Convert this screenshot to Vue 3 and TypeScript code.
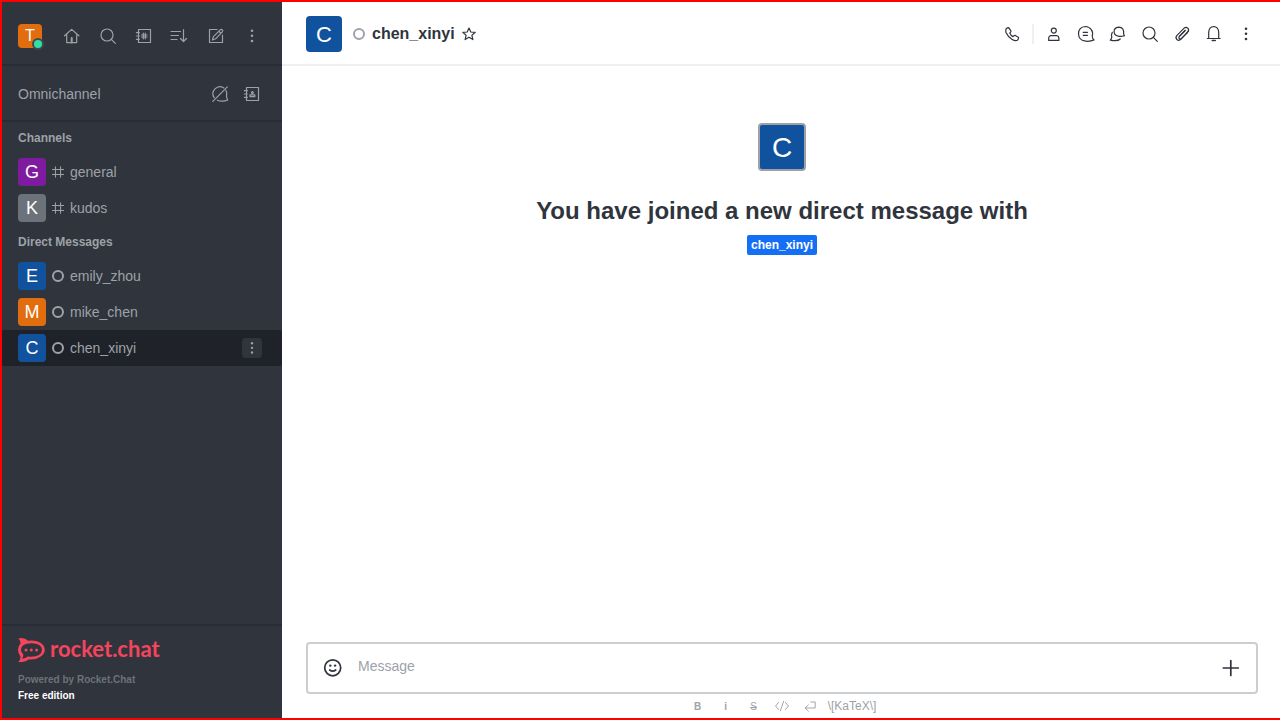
<script setup lang="ts">
import { ref } from 'vue'

interface Room {
  name: string
  letter: string
  color: string
}

interface Action {
  label: string
  icon: string
}

const icons: Record<string, string> = {
  home: '<path d="M2.5 9.8 9.700 3.400l7.200 6.400M4.700 8.400v8.200h10V8.400"/><path d="M9.700 12v4.600" stroke-width="2"/>',
  search: '<circle cx="9" cy="9" r="6"/><path d="m13.300 13.300 4 4"/>',
  directory:
    '<path d="M4.500 6V3.500h12v13h-12V14M4.500 7.500V9M4.500 11v1.500M2.400 6.700h3M2.400 10h3M2.400 13.300h3"/><path d="M9.300 7.200v5.600M11.300 7.200v5.600M7.500 9h5.600M7.500 11h5.600"/>',
  sort: '<path d="M1 5.500h9.500M1 9.500h7.500M1 13.500h6M13.500 3.500v12M10.500 12.500l3 3 3-3"/>',
  edit: '<path d="M11 3.500H3.500v13h13V9"/><path d="m6.500 14 .9-3.400 6.800-6.800q1-.9 2 0t.1 2L9.600 12.800zM12.800 5.200l2.100 2.100"/>',
  kebab:
    '<g fill="currentColor" stroke="none"><circle cx="10" cy="4.700" r="1.300"/><circle cx="10" cy="9.800" r="1.300"/><circle cx="10" cy="15" r="1.300"/></g>',
  chatOff:
    '<path d="M13.800 3.900A7 7 0 0 0 4.200 13.700M16 6.400q1.300 2.600.5 5.600.2 2.500 1.200 4-3.700 1.600-7.700 1-1.400-.1-2.600-.7M2.800 17.300 17.300 2.800"/>',
  contacts:
    '<path d="M4.500 6V3.500h12v13h-12V14M4.500 7.500V9M4.500 11v1.500M2.400 6.700h3M2.400 10h3M2.400 13.300h3"/><circle cx="10.400" cy="8.500" r=".9"/><path d="M8 12.600v-1.800h4.800v1.800z"/>',
  hash: '<path d="M7 4v12M13 4v12M3.500 7h13M3.500 13h13"/>',
  star: '<path d="m10 4 1.800 4 4.400.4-3.300 2.900 1 4.300-3.900-2.300-3.900 2.300 1-4.300-3.300-2.900L8.200 8z"/>',
  phone:
    '<path d="M4.300 4.700q1.200-1.100 2.400-1l2.300 3.500q-.1 1.200-1.300 1.900 1 2.400 3.300 3.500.9-1.200 2-1.300l3.600 2.200q.1 1.500-1.200 2.700-2.200 1-5.200-.8Q5.700 12.600 4 8.500q-.6-2.500.3-3.800z"/>',
  person:
    '<circle cx="9.800" cy="6.600" r="2.500"/><path d="M4.700 16.400v-2.300q.1-2.300 2-2.500h6.200q1.900.2 2 2.500v2.300z"/>',
  thread:
    '<path d="M16.200 12.300q1.200-4-.9-6.700Q13.200 2.600 9.500 2.500q-7 .6-7 7.200.2 6.800 7.400 7.500 4.500.4 8.200-1.300-1.700-1.100-1.900-3.600zM7.200 8.300h4.300M7.200 11.300h4.300"/>',
  discussion:
    '<path d="M15.600 9.500q.6-6.200-4.800-6.400-4.900.4-4.700 4.700.3 4.200 4.900 4.500 3 .3 5.500-.6-.9-.7-.9-2.200zM4.300 8.300q-1.200 2.300-.5 4.700-.1 2.100-1.500 3.100 7.500 1.500 9.900-1.100"/>',
  clip: '<path d="m15 9-5.900 6.100q-2.200 2.100-4.200.4-1.900-1.900.1-4.100l6.900-7.100q2.200-1.700 3.900-.2 1.700 1.800-.1 3.800l-6.300 6.500q-1.200 1-2.200.2-.9-1 .2-2.200l5.700-5.900"/><path d="m13.100 6.500-5.700 5.900M15 9l1.500-2"/>',
  bell: '<path d="M4.700 14.500V8.200Q5 2.800 9.700 2.500q4.700.3 5 5.700v6.300M3.300 14.500h12.800"/><path d="M8.300 16.500h2.900" stroke-width="1.600"/>',
  code: '<path d="M5.700 5.500 2 10l3.700 4.500M14.300 5.500 18 10l-3.700 4.500M12 4 8 16"/>',
  enter: '<path d="M11 5h5.500v7.500H4M8 8.500l-4 4 4 4"/>',
  plus: '<path d="M9.800 2.500v15M2.300 10h15"/>',
  smile:
    '<circle cx="9.700" cy="9.800" r="8"/><path d="M6.700 12q3 2.400 6 0"/><g fill="currentColor" stroke="none"><circle cx="7.300" cy="7.600" r="1.200"/><circle cx="12.100" cy="7.600" r="1.200"/></g>',
}

const sidebarActions: Action[] = [
  { label: 'Home', icon: 'home' },
  { label: 'Search', icon: 'search' },
  { label: 'Directory', icon: 'directory' },
  { label: 'Display', icon: 'sort' },
  { label: 'Create new', icon: 'edit' },
  { label: 'Administration', icon: 'kebab' },
]

const omnichannelActions: Action[] = [
  { label: 'Turn on answer chats', icon: 'chatOff' },
  { label: 'Contact center', icon: 'contacts' },
]

const roomActions: Action[] = [
  { label: 'User info', icon: 'person' },
  { label: 'Threads', icon: 'thread' },
  { label: 'Discussions', icon: 'discussion' },
  { label: 'Search messages', icon: 'search' },
  { label: 'Files', icon: 'clip' },
  { label: 'Notifications', icon: 'bell' },
  { label: 'Options', icon: 'kebab' },
]

const channels: Room[] = [
  { name: 'general', letter: 'G', color: 'purple' },
  { name: 'kudos', letter: 'K', color: 'grey' },
]

const directs: Room[] = [
  { name: 'emily_zhou', letter: 'E', color: 'blue' },
  { name: 'mike_chen', letter: 'M', color: 'orange' },
  { name: 'chen_xinyi', letter: 'C', color: 'blue' },
]

const activeRoom = ref('chen_xinyi')
const draft = ref('')
</script>

<template>
  <div class="app">
    <aside class="sidebar">
      <header class="topbar">
        <button class="me" aria-label="User menu">
          <span class="avatar small orange">T</span>
          <span class="online"></span>
        </button>
        <nav class="actions wide">
          <button v-for="a in sidebarActions" :key="a.icon" class="icon-btn" :aria-label="a.label">
            <svg class="icon" viewBox="0 0 20 20" v-html="icons[a.icon]"></svg>
          </button>
        </nav>
      </header>

      <section class="omni">
        <span>Omnichannel</span>
        <div class="actions">
          <button v-for="a in omnichannelActions" :key="a.icon" class="icon-btn" :aria-label="a.label">
            <svg class="icon" viewBox="0 0 20 20" v-html="icons[a.icon]"></svg>
          </button>
        </div>
      </section>

      <div class="rooms">
        <h2 class="group">Channels</h2>
        <a v-for="room in channels" :key="room.name" class="room" href="#" @click.prevent="activeRoom = room.name">
          <span class="avatar medium" :class="room.color">{{ room.letter }}</span>
          <svg class="hash" viewBox="3 3 14 14" v-html="icons.hash"></svg>
          <span class="room-name">{{ room.name }}</span>
        </a>
        <h2 class="group">Direct Messages</h2>
        <div v-for="room in directs" :key="room.name" class="room" :class="{ active: room.name === activeRoom }">
          <a class="room-link" href="#" @click.prevent="activeRoom = room.name">
            <span class="avatar medium" :class="room.color">{{ room.letter }}</span>
            <span class="status"></span>
            <span class="room-name">{{ room.name }}</span>
          </a>
          <button v-if="room.name === activeRoom" class="room-menu" aria-label="Options">
            <svg class="menu-icon" viewBox="0 0 20 20" v-html="icons.kebab"></svg>
          </button>
        </div>
      </div>

      <footer class="foot">
        <a class="logo" href="#">
          <svg class="logo-mark" viewBox="0 0 28 24">
            <path
              fill="currentColor"
              fill-rule="evenodd"
              d="M.3.400Q6.600-1 10 2.700 17.500 1.700 22 4.500q4.800 2.800 4.800 7.300T22 19q-4.500 3-11.200 2.500Q6.500 24.800.2 23.800 3 21.300 2.300 18.200 0 15.500 0 11.800T2.500 5.600Q2.700 2.500.3.400zM13.500 5.200Q3 5.500 2.900 11.800q.1 2.900 2.500 4.700-.2 2.600-1.200 4.200 3.400-.2 5.400-2.200Q23.700 19.600 24 11.800 23.700 5.500 13.500 5.200z"
            />
            <g fill="currentColor">
              <circle cx="8" cy="12" r="1.500" />
              <circle cx="13.300" cy="12" r="1.500" />
              <circle cx="18.600" cy="12" r="1.500" />
            </g>
          </svg>
          <span class="logo-text">rocket.chat</span>
        </a>
        <p class="powered">Powered by Rocket.Chat</p>
        <p class="edition">Free edition</p>
      </footer>
    </aside>

    <main class="main">
      <header class="room-header">
        <span class="avatar large blue">C</span>
        <span class="status"></span>
        <h1 class="title">chen_xinyi</h1>
        <button class="fav" aria-label="Favorite">
          <svg class="icon" viewBox="0 0 20 20" v-html="icons.star"></svg>
        </button>
        <div class="actions tools">
          <button class="icon-btn" aria-label="Call">
            <svg class="icon" viewBox="0 0 20 20" v-html="icons.phone"></svg>
          </button>
          <span class="divider"></span>
          <button v-for="a in roomActions" :key="a.icon" class="icon-btn" :aria-label="a.label">
            <svg class="icon" viewBox="0 0 20 20" v-html="icons[a.icon]"></svg>
          </button>
        </div>
      </header>

      <section class="body">
        <span class="avatar huge blue">C</span>
        <h2 class="intro">You have joined a new direct message with</h2>
        <a class="mention" href="#">chen_xinyi</a>
      </section>

      <section class="composer">
        <div class="box">
          <button class="icon-btn" aria-label="Emoji">
            <svg class="icon bold" viewBox="0 0 20 20" v-html="icons.smile"></svg>
          </button>
          <textarea v-model="draft" class="input" rows="1" placeholder="Message" aria-label="Message"></textarea>
          <button class="icon-btn" aria-label="More actions">
            <svg class="icon bold" viewBox="0 0 20 20" v-html="icons.plus"></svg>
          </button>
        </div>
        <div class="format">
          <button class="fmt strong" aria-label="Bold">B</button>
          <button class="fmt strong" aria-label="Italic">i</button>
          <button class="fmt strike" aria-label="Strike">S</button>
          <button class="fmt" aria-label="Code">
            <svg class="fmt-icon" viewBox="0 0 20 20" v-html="icons.code"></svg>
          </button>
          <button class="fmt" aria-label="Multi-line">
            <svg class="fmt-icon" viewBox="0 0 20 20" v-html="icons.enter"></svg>
          </button>
          <a class="katex" href="#">\[KaTeX\]</a>
        </div>
      </section>
    </main>
  </div>
</template>

<style>
body {
  margin: 0;
}
</style>

<style scoped>
.app {
  display: flex;
  box-sizing: border-box;
  height: 100vh;
  border: 2px solid #ff0000;
  border-right: 0;
  font-family: "Liberation Sans", Arial, sans-serif;
  font-size: 14px;
  line-height: 20px;
  color: #2f343d;
  background: #ffffff;
}
button {
  display: flex;
  align-items: center;
  justify-content: center;
  padding: 0;
  border: 0;
  background: none;
  color: inherit;
  font-family: inherit;
  cursor: pointer;
}
a {
  color: inherit;
  text-decoration: none;
}
h1,
h2,
p {
  margin: 0;
}
svg {
  fill: none;
  stroke: currentColor;
  stroke-width: 1.2;
  stroke-linejoin: round;
  stroke-linecap: round;
}
.icon {
  width: 20px;
  height: 20px;
}
.icon.bold {
  stroke-width: 1.7;
}
.icon-btn {
  width: 28px;
  height: 28px;
}
.actions {
  display: flex;
  align-items: center;
  gap: 4px;
}
.actions.wide {
  gap: 8px;
}
.avatar {
  display: flex;
  flex: none;
  align-items: center;
  justify-content: center;
  border-radius: 4px;
  color: #ffffff;
}
.small {
  width: 24px;
  height: 24px;
  font-size: 16px;
}
.medium {
  width: 28px;
  height: 28px;
  font-size: 18px;
}
.large {
  box-sizing: border-box;
  width: 36px;
  height: 36px;
  padding-top: 2px;
  font-size: 22px;
}
.huge {
  box-sizing: border-box;
  width: 48px;
  height: 48px;
  padding-top: 2px;
  border: 2px solid #9ea2a8;
  font-size: 28px;
}
.purple {
  background: #7f1b9f;
}
.grey {
  background: #6c727a;
}
.blue {
  background: #10529e;
}
.orange {
  background: #e26d0e;
}
.status {
  box-sizing: border-box;
  flex: none;
  width: 12px;
  height: 12px;
  border: 2px solid #9ea2a8;
  border-radius: 50%;
}

.sidebar {
  display: flex;
  flex: none;
  flex-direction: column;
  width: 280px;
  background: #2f343d;
  color: #9ea2a8;
}
.topbar {
  display: flex;
  box-sizing: border-box;
  align-items: center;
  justify-content: space-between;
  height: 64px;
  padding: 6px 16px 0;
  border-bottom: 2px solid #292d36;
}
.me {
  position: relative;
}
.online {
  position: absolute;
  right: -2px;
  bottom: -2px;
  width: 8px;
  height: 8px;
  border: 2px solid #414852;
  border-radius: 50%;
  background: #2de0a5;
}
.omni {
  display: flex;
  box-sizing: border-box;
  align-items: center;
  justify-content: space-between;
  height: 56px;
  padding: 2px 16px 0;
  border-bottom: 2px solid #292d36;
}
.rooms {
  flex: 1;
}
.group {
  padding: 6px 16px;
  font-size: 12px;
  font-weight: 700;
}
.room,
.room-link {
  display: flex;
  align-items: center;
  gap: 6px;
}
.room {
  padding: 4px 20px 4px 16px;
}
.room-link {
  flex: 1;
}
.room.active {
  border-radius: 2px;
  background: #1f2329;
}
.hash {
  width: 12px;
  height: 12px;
}
.room-menu {
  width: 20px;
  height: 20px;
  border-radius: 4px;
  background: #2f343d;
}
.menu-icon {
  width: 18px;
  height: 18px;
}
.foot {
  padding: 12px 16px 14px;
  border-top: 2px solid #292d36;
  font-size: 10px;
  font-weight: 700;
  line-height: 16px;
}
.logo {
  display: flex;
  align-items: center;
  gap: 4px;
  height: 24px;
  margin-bottom: 10px;
  color: #f5455c;
}
.logo-mark {
  width: 28px;
  height: 24px;
  stroke: none;
}
.logo-text {
  padding-bottom: 2px;
  font-family: Lato, sans-serif;
  font-size: 22px;
  line-height: 24px;
}
.powered {
  color: #6c727a;
}
.edition {
  color: #ffffff;
}

.main {
  display: flex;
  flex: 1;
  flex-direction: column;
  min-width: 0;
}
.room-header {
  display: flex;
  box-sizing: border-box;
  align-items: center;
  height: 64px;
  padding: 2px 20px 0 24px;
  border-bottom: 2px solid #eeeff1;
}
.room-header .status {
  margin: 0 7px 0 11px;
}
.title {
  font-size: 16px;
  line-height: 24px;
}
.fav {
  margin-left: 4px;
}
.tools {
  margin-left: auto;
}
.divider {
  width: 2px;
  height: 20px;
  margin: 0 2px;
  background: #eeeff1;
}
.body {
  display: flex;
  flex: 1;
  flex-direction: column;
  align-items: center;
  padding: 57px 22px 0 24px;
}
.intro {
  margin: 24px 0 8px;
  font-size: 24px;
  line-height: 32px;
}
.mention {
  padding: 0 4px;
  border-radius: 2px;
  background: #156ff5;
  color: #ffffff;
  font-size: 12px;
  font-weight: 700;
}
.composer {
  padding: 0 22px 0 24px;
}
.box {
  display: flex;
  box-sizing: border-box;
  align-items: center;
  height: 52px;
  padding: 0 11px;
  border: 2px solid #cbced1;
  border-radius: 4px;
}
.input {
  flex: 1;
  height: 24px;
  margin: 0 11px;
  padding: 0;
  border: 0;
  outline: 0;
  resize: none;
  background: none;
  color: inherit;
  font: inherit;
}
.input::placeholder {
  color: #9ea2a8;
}
.format {
  display: flex;
  align-items: center;
  justify-content: center;
  gap: 8px;
  height: 24px;
  color: #9ea2a8;
  font-size: 12px;
}
.fmt {
  width: 20px;
  height: 20px;
  font-size: 10px;
}
.strong {
  font-weight: 700;
}
.strike {
  text-decoration: line-through;
}
.fmt-icon {
  width: 16px;
  height: 16px;
}
</style>
